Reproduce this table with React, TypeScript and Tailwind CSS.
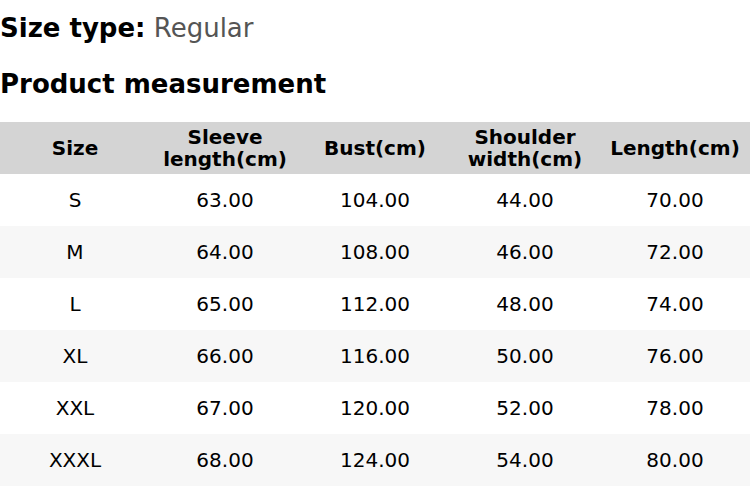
import React from "react";

const rows = [
  ["S", "63.00", "104.00", "44.00", "70.00"],
  ["M", "64.00", "108.00", "46.00", "72.00"],
  ["L", "65.00", "112.00", "48.00", "74.00"],
  ["XL", "66.00", "116.00", "50.00", "76.00"],
  ["XXL", "67.00", "120.00", "52.00", "78.00"],
  ["XXXL", "68.00", "124.00", "54.00", "80.00"],
];

const headers = ["Size", "Sleeve length(cm)", "Bust(cm)", "Shoulder width(cm)", "Length(cm)"];

export default function App() {
  return (
    <div className="w-[750px] h-[486px] bg-white text-black overflow-hidden" style={{ fontFamily: '"DejaVu Sans", sans-serif' }}>
      <div className="pt-[10px] text-[26px] leading-[36px]">
        <span className="font-bold">Size type:</span>
        <span className="text-[#555555]"> Regular</span>
      </div>
      <div className="mt-[20px] text-[26px] leading-[36px] font-bold">Product measurement</div>
      <div className="mt-[20px] grid grid-cols-5">
        {headers.map((h) => (
          <div key={h} className="h-[52px] bg-[#d4d4d4] flex items-center justify-center text-center font-bold text-[20px] leading-[22px] px-1">
            {h}
          </div>
        ))}
        {rows.map((r, i) =>
          r.map((c, j) => (
            <div
              key={i + "-" + j}
              className={`h-[52px] flex items-center justify-center text-[20px] ${i % 2 === 1 ? "bg-[#f7f7f7]" : "bg-white"}`}
            >
              {c}
            </div>
          ))
        )}
      </div>
    </div>
  );
}
